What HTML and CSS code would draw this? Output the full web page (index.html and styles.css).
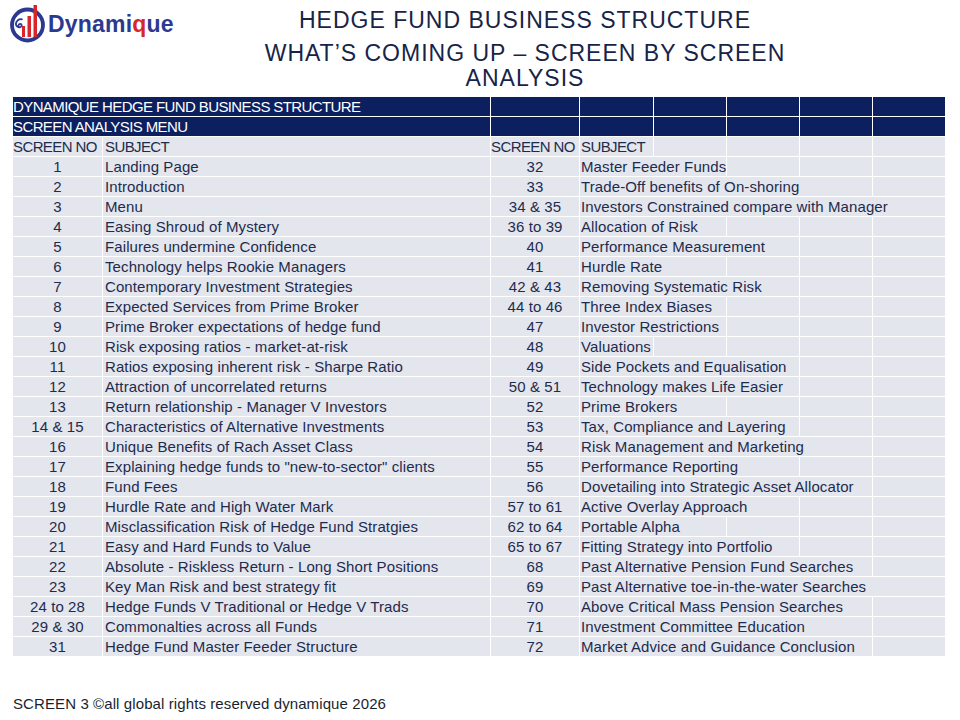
FILE: index.html
```html
<!DOCTYPE html>
<html lang="en">
<head>
<meta charset="utf-8">
<title>Hedge Fund Business Structure</title>
<link rel="stylesheet" href="styles.css">
</head>
<body>
<header class="top">
  <div class="logo">
    <svg class="logo-mark" viewBox="0 0 42 42" width="42" height="42" aria-hidden="true">
      <circle cx="19.5" cy="21" r="15.5" fill="none" stroke="#2b3990" stroke-width="3.8"/>
      <path d="M10.5 21.5 a1.6 1.6 0 1 1 1.8 1.6 a3.4 3.4 0 0 1 -4.4 -3.2 a5 5 0 0 1 6 -4.6" fill="none" stroke="#2b3990" stroke-width="1.8" stroke-linecap="round"/>
      <rect x="14" y="22" width="3" height="11" fill="#d7262b"/>
      <rect x="19.5" y="12" width="3.5" height="21" fill="#d7262b"/>
      <rect x="25.5" y="1" width="3.5" height="32" fill="#d7262b"/>
    </svg>
    <span class="logo-text">Dynami<span class="q">q</span>ue</span>
  </div>
  <div class="titles">
    <h1>HEDGE FUND BUSINESS STRUCTURE</h1>
    <h2>WHAT’S COMING UP – SCREEN BY SCREEN<br>ANALYSIS</h2>
  </div>
</header>

<table class="menu">
  <colgroup>
    <col class="c-no"><col class="c-subj"><col class="c-no2"><col class="c-subj2">
    <col class="c-x"><col class="c-x"><col class="c-x"><col class="c-x">
  </colgroup>
  <tr class="dark"><td colspan="2">DYNAMIQUE HEDGE FUND BUSINESS STRUCTURE</td><td></td><td></td><td></td><td></td><td></td><td></td></tr>
  <tr class="dark"><td colspan="2">SCREEN ANALYSIS MENU</td><td></td><td></td><td></td><td></td><td></td><td></td></tr>
  <tr class="head"><td class="hno">SCREEN NO</td><td class="subj">SUBJECT</td><td class="hno2">SCREEN NO</td><td class="subj2">SUBJECT</td><td></td><td></td><td></td><td></td></tr>
  <tr><td class="no">1</td><td class="subj">Landing Page</td><td class="no">32</td><td class="subj2" colspan="2">Master Feeder Funds</td><td></td><td></td><td></td></tr>
  <tr><td class="no">2</td><td class="subj">Introduction</td><td class="no">33</td><td class="subj2" colspan="4">Trade-Off benefits of On-shoring</td><td></td></tr>
  <tr><td class="no">3</td><td class="subj">Menu</td><td class="no">34 &amp; 35</td><td class="subj2" colspan="5">Investors Constrained compare with Manager</td></tr>
  <tr><td class="no">4</td><td class="subj">Easing Shroud of Mystery</td><td class="no">36 to 39</td><td class="subj2" colspan="2">Allocation of Risk</td><td></td><td></td><td></td></tr>
  <tr><td class="no">5</td><td class="subj">Failures undermine Confidence</td><td class="no">40</td><td class="subj2" colspan="3">Performance Measurement</td><td></td><td></td></tr>
  <tr><td class="no">6</td><td class="subj">Technology helps Rookie Managers</td><td class="no">41</td><td class="subj2" colspan="2">Hurdle Rate</td><td></td><td></td><td></td></tr>
  <tr><td class="no">7</td><td class="subj">Contemporary Investment Strategies</td><td class="no">42 &amp; 43</td><td class="subj2" colspan="3">Removing Systematic Risk</td><td></td><td></td></tr>
  <tr><td class="no">8</td><td class="subj">Expected Services from Prime Broker</td><td class="no">44 to 46</td><td class="subj2" colspan="2">Three Index Biases</td><td></td><td></td><td></td></tr>
  <tr><td class="no">9</td><td class="subj">Prime Broker expectations of hedge fund</td><td class="no">47</td><td class="subj2" colspan="2">Investor Restrictions</td><td></td><td></td><td></td></tr>
  <tr><td class="no">10</td><td class="subj">Risk exposing ratios - market-at-risk</td><td class="no">48</td><td class="subj2">Valuations</td><td></td><td></td><td></td><td></td></tr>
  <tr><td class="no">11</td><td class="subj">Ratios exposing inherent risk - Sharpe Ratio</td><td class="no">49</td><td class="subj2" colspan="3">Side Pockets and Equalisation</td><td></td><td></td></tr>
  <tr><td class="no">12</td><td class="subj">Attraction of uncorrelated returns</td><td class="no">50 &amp; 51</td><td class="subj2" colspan="3">Technology makes Life Easier</td><td></td><td></td></tr>
  <tr><td class="no">13</td><td class="subj">Return relationship - Manager V Investors</td><td class="no">52</td><td class="subj2" colspan="2">Prime Brokers</td><td></td><td></td><td></td></tr>
  <tr><td class="no">14 &amp; 15</td><td class="subj">Characteristics of Alternative Investments</td><td class="no">53</td><td class="subj2" colspan="3">Tax, Compliance and Layering</td><td></td><td></td></tr>
  <tr><td class="no">16</td><td class="subj">Unique Benefits of Rach Asset Class</td><td class="no">54</td><td class="subj2" colspan="4">Risk Management and Marketing</td><td></td></tr>
  <tr><td class="no">17</td><td class="subj">Explaining hedge funds to "new-to-sector" clients</td><td class="no">55</td><td class="subj2" colspan="3">Performance Reporting</td><td></td><td></td></tr>
  <tr><td class="no">18</td><td class="subj">Fund Fees</td><td class="no">56</td><td class="subj2" colspan="4">Dovetailing into Strategic Asset Allocator</td><td></td></tr>
  <tr><td class="no">19</td><td class="subj">Hurdle Rate and High Water Mark</td><td class="no">57 to 61</td><td class="subj2" colspan="3">Active Overlay Approach</td><td></td><td></td></tr>
  <tr><td class="no">20</td><td class="subj">Misclassification Risk of Hedge Fund Stratgies</td><td class="no">62 to 64</td><td class="subj2" colspan="2">Portable Alpha</td><td></td><td></td><td></td></tr>
  <tr><td class="no">21</td><td class="subj">Easy and Hard Funds to Value</td><td class="no">65 to 67</td><td class="subj2" colspan="3">Fitting Strategy into Portfolio</td><td></td><td></td></tr>
  <tr><td class="no">22</td><td class="subj">Absolute - Riskless Return - Long Short Positions</td><td class="no">68</td><td class="subj2" colspan="4">Past Alternative Pension Fund Searches</td><td></td></tr>
  <tr><td class="no">23</td><td class="subj">Key Man Risk and best strategy fit</td><td class="no">69</td><td class="subj2" colspan="5">Past Alternative toe-in-the-water Searches</td></tr>
  <tr><td class="no">24 to 28</td><td class="subj">Hedge Funds V Traditional or Hedge V Trads</td><td class="no">70</td><td class="subj2" colspan="4">Above Critical Mass Pension Searches</td><td></td></tr>
  <tr><td class="no">29 &amp; 30</td><td class="subj">Commonalties across all Funds</td><td class="no">71</td><td class="subj2" colspan="4">Investment Committee Education</td><td></td></tr>
  <tr><td class="no">31</td><td class="subj">Hedge Fund Master Feeder Structure</td><td class="no">72</td><td class="subj2" colspan="4">Market Advice and Guidance Conclusion</td><td></td></tr>
</table>

<footer class="foot">SCREEN 3 ©all global rights reserved dynamique 2026</footer>
</body>
</html>
```

FILE: styles.css
```css
html, body {
  margin: 0;
  padding: 0;
  background: #ffffff;
}

body {
  width: 960px;
  height: 720px;
  font-family: "Liberation Sans", Arial, sans-serif;
  color: #1f2b4d;
  overflow: hidden;
}

.top {
  display: grid;
  height: 96px;
}

.logo,
.titles {
  grid-area: 1 / 1;
}

.logo {
  justify-self: start;
  align-self: start;
  display: flex;
  align-items: center;
  padding: 4px 0 0 8px;
}

.logo-mark {
  display: block;
}

.logo-text {
  margin-left: -2px;
  margin-top: -2px;
  font-weight: bold;
  font-size: 23px;
  color: #2b3990;
  letter-spacing: 0.2px;
}

.logo-text .q {
  color: #d7262b;
}

.titles {
  padding: 5px 0 0 90px;
  text-align: center;
  color: #172447;
}

.titles h1 {
  margin: 0;
  font-weight: normal;
  font-size: 23px;
  line-height: 30px;
  letter-spacing: 1px;
}

.titles h2 {
  margin: 6px 0 0;
  font-weight: normal;
  font-size: 23px;
  line-height: 25px;
  letter-spacing: 1px;
}

.menu {
  margin-left: 12px;
  width: 933px;
  table-layout: fixed;
  border-collapse: collapse;
  font-size: 15px;
  letter-spacing: 0.1px;
}

.c-no { width: 90px; }
.c-subj { width: 388px; }
.c-no2 { width: 89px; }
.c-subj2 { width: 74px; }
.c-x { width: 73px; }

.menu td {
  height: 19px;
  padding: 0;
  line-height: 19px;
  border: 1px solid #ffffff;
  background: #e3e6ed;
  white-space: nowrap;
  overflow: hidden;
  color: #1f2b4d;
}

.menu tr.dark td {
  background: #0c1f5e;
  color: #ffffff;
  letter-spacing: -0.6px;
}

.menu tr.head td {
  letter-spacing: -0.6px;
  overflow: visible;
}

.menu td.no {
  text-align: center;
}

.menu td.subj {
  padding-left: 2px;
}

.menu td.subj2 {
  padding-left: 1px;
}

.foot {
  margin: 37px 0 0 13px;
  font-size: 15px;
  line-height: 20px;
  letter-spacing: 0.1px;
  color: #1a1f2e;
}
```
